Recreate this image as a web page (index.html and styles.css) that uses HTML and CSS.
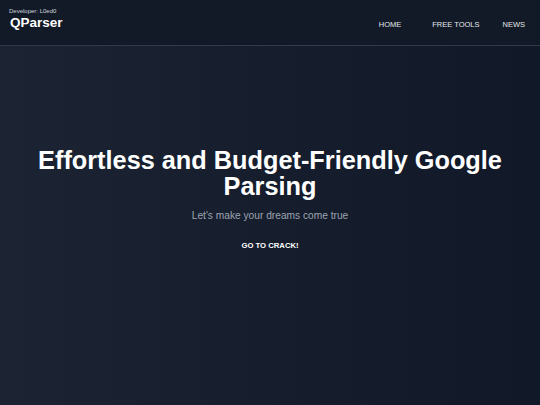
FILE: index.html
```html
<!DOCTYPE html>
<html>
<head>
<meta charset="utf-8">
<link rel="stylesheet" href="styles.css">
</head>
<body>
<header class="header">
  <div class="brand">
    <div class="dev">Developer: L0ed0</div>
    <div class="logo">QParser</div>
  </div>
  <nav class="nav">
    <a class="nav-link nav-link-first">HOME</a>
    <a class="nav-link">FREE TOOLS</a>
    <a class="nav-link">NEWS</a>
  </nav>
</header>
<main class="hero">
  <h1 class="title">Effortless and Budget-Friendly Google Parsing</h1>
  <p class="subtitle">Let's make your dreams come true</p>
  <a class="cta">GO TO CRACK!</a>
</main>
</body>
</html>
```
FILE: styles.css
```css
html, body {
  margin: 0;
  padding: 0;
  height: 100%;
}
body {
  font-family: "Liberation Sans", Arial, sans-serif;
  background: linear-gradient(to right, #1c2433 0%, #161e2e 50%, #111827 100%);
  color: #fff;
  display: flex;
  flex-direction: column;
}
.header {
  height: 45px;
  border-bottom: 1px solid #2f3a4a;
  background: #121a28;
  display: flex;
  justify-content: space-between;
  align-items: flex-start;
  padding: 0 15px 0 9px;
}
.brand {
  padding-top: 8px;
}
.dev {
  font-size: 6px;
  line-height: 7px;
  color: #d1d5db;
}
.logo {
  font-size: 13.5px;
  font-weight: bold;
  line-height: 15px;
  color: #fff;
  padding-left: 1px;
}
.nav {
  display: flex;
  gap: 23px;
  padding-top: 20px;
}
.nav-link {
  font-size: 7.5px;
  line-height: 9px;
  color: #e5e7eb;
}
.nav-link-first {
  margin-right: 8px;
}
.hero {
  flex: 1;
  display: flex;
  flex-direction: column;
  align-items: center;
  text-align: center;
  padding-top: 101px;
}
.title {
  margin: 0;
  font-size: 25.3px;
  line-height: 26px;
  font-weight: bold;
  max-width: 500px;
}
.subtitle {
  margin: 10px 0 0;
  font-size: 10.2px;
  line-height: 13px;
  color: #9ca3af;
}
.cta {
  margin-top: 19px;
  font-size: 7.7px;
  font-weight: bold;
  line-height: 10px;
  color: #fff;
}
```
